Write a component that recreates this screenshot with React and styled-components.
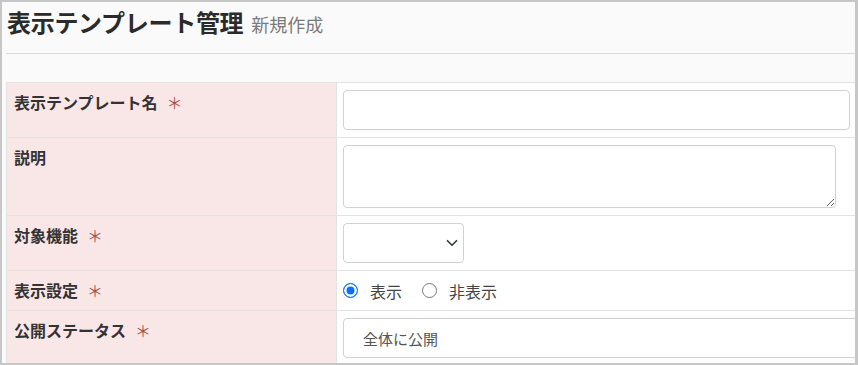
import React from "react";
import styled, { createGlobalStyle } from "styled-components";

const GlobalStyle = createGlobalStyle`
	html, body {
		margin: 0;
		padding: 0;
		background: #ffffff;
	}
	body {
		font-family: "Noto Sans CJK JP", "Noto Sans", sans-serif;
		color: #333333;
	}
	* {
		box-sizing: border-box;
	}
`;

const Frame = styled.div`
	width: 858px;
	height: 365px;
	border: 2px solid #c7c7c7;
	border-right-width: 3px;
	background: #fafafa;
	padding-left: 4px;
	overflow: hidden;
`;

const Header = styled.div`
	display: flex;
	align-items: baseline;
	gap: 8px;
	height: 52px;
	padding: 3px 0 0 1px;
	border-bottom: 1px solid #d9d9d9;
`;

const Title = styled.h1`
	margin: 0;
	font-size: 24px;
	line-height: 34px;
	font-weight: 700;
	color: #2b2b2b;
	letter-spacing: -0.3px;
`;

const SubTitle = styled.span`
	font-size: 18px;
	color: #7a7a7a;
	font-weight: 400;
`;

const Spacer = styled.div`
	height: 28px;
`;

const FormTable = styled.div`
	display: grid;
	grid-template-columns: 330px 1fr;
	border-top: 1px solid #e3e3e3;
	border-left: 1px solid #e3e3e3;
`;

const LabelCell = styled.div`
	background: #f9e7e8;
	border-right: 1px solid #e3e3e3;
	border-bottom: 1px solid #e3e3e3;
	padding: 7px 7px;
	font-size: 16px;
	line-height: 24px;
	font-weight: 700;
	color: #333333;
`;

const Required = styled.span`
	color: #a8504d;
	font-weight: 400;
	margin-left: 9px;
`;

const ValueCell = styled.div`
	background: #ffffff;
	border-bottom: 1px solid #e3e3e3;
	padding: 7px 5px 7px 6px;
	display: flex;
	align-items: ${(p) => (p.$center ? "center" : "flex-start")};
	min-width: 0;
`;

const TextInput = styled.input`
	display: block;
	width: 100%;
	height: 40px;
	border: 1px solid #d2d2d2;
	border-radius: 4px;
	background: #ffffff;
	font-family: inherit;
	font-size: 15px;
	padding: 0 12px;
	outline: none;
`;

const TextArea = styled.textarea`
	display: block;
	width: 493px;
	height: 63px;
	border: 1px solid #d2d2d2;
	border-radius: 4px;
	background: #ffffff;
	font-family: inherit;
	font-size: 15px;
	padding: 6px 12px;
	outline: none;
	resize: vertical;
`;

const SelectWrap = styled.div`
	position: relative;
	width: ${(p) => p.$width}px;
	flex-shrink: 0;
`;

const Select = styled.select`
	appearance: none;
	display: block;
	width: 100%;
	height: 40px;
	border: 1px solid #d2d2d2;
	border-radius: 4px;
	background: #ffffff;
	font-family: inherit;
	font-size: 15px;
	color: #555555;
	padding: 0 19px;
	outline: none;
`;

const Chevron = styled.svg`
	position: absolute;
	right: 6px;
	top: 14px;
	pointer-events: none;
`;

const RadioGroup = styled.div`
	display: flex;
	align-items: center;
	gap: 20px;
	height: 25px;
`;

const RadioLabel = styled.label`
	display: flex;
	align-items: center;
	gap: 12px;
	font-size: 16px;
	color: #444444;
`;

const Radio = styled.input`
	appearance: none;
	margin: 0;
	width: 15px;
	height: 15px;
	border-radius: 50%;
	border: 1px solid #7a7a7a;
	background: #ffffff;
	&:checked {
		border: 1px solid #0d6efd;
		background: #0d6efd;
		box-shadow: inset 0 0 0 2.5px #ffffff;
	}
`;

const rows = [
	{ label: "表示テンプレート名", required: true },
	{ label: "説明", required: false },
	{ label: "対象機能", required: true },
	{ label: "表示設定", required: true },
	{ label: "公開ステータス", required: true },
];

const ChevronIcon = () => (
	<Chevron width="12" height="12" viewBox="0 0 16 16">
		<path d="M2 5l6 6 6-6" fill="none" stroke="#343a40" strokeWidth="2.2" strokeLinecap="round" strokeLinejoin="round" />
	</Chevron>
);

const Label = ({ row }) => (
	<LabelCell>
		{row.label}
		{row.required && <Required>＊</Required>}
	</LabelCell>
);

const App = () => {
	return (
		<>
			<GlobalStyle />
			<Frame>
				<Header>
					<Title>表示テンプレート管理</Title>
					<SubTitle>新規作成</SubTitle>
				</Header>
				<Spacer />
				<FormTable>
					<Label row={rows[0]} />
					<ValueCell>
						<TextInput type="text" />
					</ValueCell>

					<Label row={rows[1]} />
					<ValueCell>
						<TextArea />
					</ValueCell>

					<Label row={rows[2]} />
					<ValueCell>
						<SelectWrap $width={121}>
							<Select defaultValue="">
								<option value=""></option>
							</Select>
							<ChevronIcon />
						</SelectWrap>
					</ValueCell>

					<Label row={rows[3]} />
					<ValueCell $center>
						<RadioGroup>
							<RadioLabel>
								<Radio type="radio" name="display" defaultChecked />
								表示
							</RadioLabel>
							<RadioLabel>
								<Radio type="radio" name="display" />
								非表示
							</RadioLabel>
						</RadioGroup>
					</ValueCell>

					<Label row={rows[4]} />
					<ValueCell>
						<SelectWrap $width={560}>
							<Select defaultValue="all">
								<option value="all">全体に公開</option>
							</Select>
						</SelectWrap>
					</ValueCell>
				</FormTable>
			</Frame>
		</>
	);
};

export default App;
